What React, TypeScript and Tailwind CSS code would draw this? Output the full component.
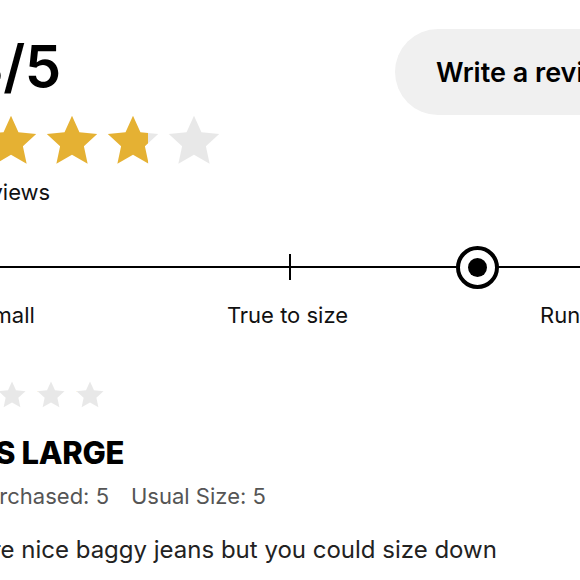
import React from 'react';

const STAR = '12,1.2 15.2,8.2 22.8,9 17.1,14.2 18.7,21.8 12,17.9 5.3,21.8 6.9,14.2 1.2,9 8.8,8.2';

const Star = ({ fill, size, id }: { fill: number; size: number; id: string }) => (
    <svg width={size} height={size} viewBox="0 0 24 24" className="shrink-0">
        <defs>
            <linearGradient id={id} x1="0" x2="1" y1="0" y2="0">
                <stop offset={fill} stopColor="#e5b133" />
                <stop offset={fill} stopColor="#e8e8e8" />
            </linearGradient>
        </defs>
        <polygon points={STAR} fill={`url(#${id})`} />
    </svg>
);

const Stars = ({ rating, size, gap, prefix }: { rating: number; size: number; gap: string; prefix: string }) => (
    <div className={`flex items-center ${gap}`}>
        {[0, 1, 2, 3, 4].map((i) => (
            <Star key={i} id={`${prefix}-${i}`} size={size} fill={Math.max(0, Math.min(1, rating - i))} />
        ))}
    </div>
);

export default function App() {
    return (
        <div className="w-[580px] h-[580px] overflow-hidden bg-white text-black font-['Inter',sans-serif]">
            {/* summary */}
            <div className="flex items-start pt-[29px]">
                <div className="w-[395px] shrink-0 flex flex-col">
                    <div className="-ml-[85px] mt-[8px] text-[58px] leading-none font-semibold tracking-[-0.5px]">3.8/5</div>
                    <div className="-ml-[78px] mt-[18px]">
                        <Stars rating={3.8} size={56} gap="gap-[5px]" prefix="big" />
                    </div>
                    <div className="-ml-[72px] mt-[12px] text-[22px] leading-none text-[#111]">128 reviews</div>
                </div>
                <button className="shrink-0 h-[86px] rounded-full bg-[#f0f0f0] pl-[41px] pr-[41px] text-[27px] font-semibold leading-none text-black whitespace-nowrap">
                    Write a review
                </button>
            </div>

            {/* fit scale */}
            <div className="-ml-[66px] w-[712px] mt-[51px]">
                <div className="relative h-[26px] flex items-center">
                    <div className="w-full h-[2px] bg-black" />
                    <div className="absolute left-[355px] top-0 w-[2px] h-[26px] bg-black" />
                    <div className="absolute left-[522px] top-[-8px] w-[43px] h-[43px] rounded-full border-[4px] border-black bg-white flex items-center justify-center">
                        <div className="w-[19px] h-[19px] rounded-full bg-black" />
                    </div>
                </div>
                <div className="mt-[24px] flex justify-between text-[22px] leading-none text-[#111]">
                    <span className="-ml-[11px]">Runs small</span>
                    <span>True to size</span>
                    <span className="-mr-[4px]">Runs large</span>
                </div>
            </div>

            {/* review */}
            <div className="mt-[54px] -ml-[81px]">
                <Stars rating={0} size={30} gap="gap-[9px]" prefix="rev" />
            </div>
            <div className="-ml-[71px] mt-[27px] text-[31px] leading-none font-extrabold tracking-[-0.3px] whitespace-nowrap">RUNS LARGE</div>
            <div className="-ml-[78px] mt-[17px] flex gap-[22px] text-[22px] leading-none text-[#555] whitespace-nowrap">
                <span>Size Purchased: 5</span>
                <span>Usual Size: 5</span>
            </div>
            <p className="-ml-[72px] mt-[31px] text-[24px] leading-none text-[#222] whitespace-nowrap">
                They're nice baggy jeans but you could size down
            </p>
        </div>
    );
}
